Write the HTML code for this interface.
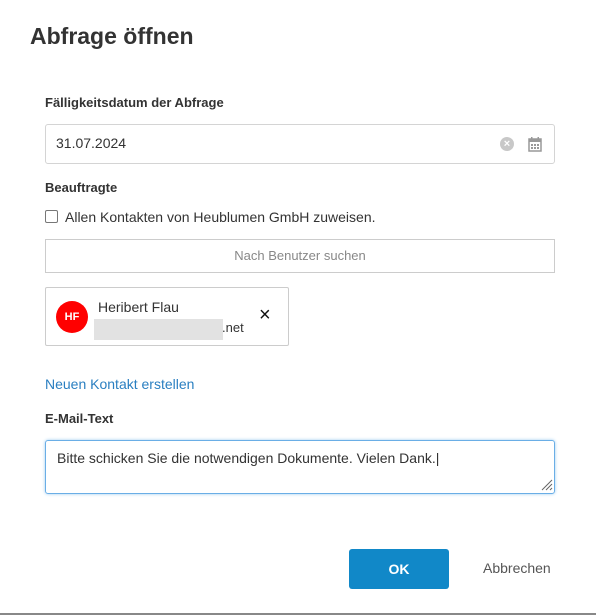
<!DOCTYPE html>
<html><head><meta charset="utf-8"><style>
*{box-sizing:border-box;margin:0;padding:0}
body{width:596px;height:615px;background:#fff;font-family:"Liberation Sans",sans-serif;color:#333;position:relative;overflow:hidden;border-bottom:2px solid #888}
.a{position:absolute}
.lbl{font-size:13px;font-weight:bold;color:#333}
</style></head><body>
<div class="a" style="left:30px;top:23px;font-size:23px;font-weight:bold;color:#333">Abfrage öffnen</div>
<div class="a lbl" style="left:45px;top:95px">Fälligkeitsdatum der Abfrage</div>
<div class="a" style="left:45px;top:124px;width:510px;height:40px;border:1px solid #d4d4d4;border-radius:3px"></div>
<div class="a" style="left:56px;top:135px;font-size:14px;color:#333">31.07.2024</div>
<div class="a" style="left:500px;top:137px;width:14px;height:14px;border-radius:50%;background:#c8c8c8;color:#fff;font-size:11px;line-height:14px;text-align:center;font-weight:bold">×</div>
<svg class="a" style="left:528px;top:136px" width="14" height="16" viewBox="0 0 14 16"><rect x="1" y="3" width="12" height="12" fill="none" stroke="#999" stroke-width="1.5"/><rect x="1" y="3" width="12" height="3" fill="#999"/><rect x="3" y="1" width="1.5" height="3" fill="#999"/><rect x="9.5" y="1" width="1.5" height="3" fill="#999"/><g fill="#999"><rect x="3" y="8" width="2" height="2"/><rect x="6" y="8" width="2" height="2"/><rect x="9" y="8" width="2" height="2"/><rect x="3" y="11" width="2" height="2"/><rect x="6" y="11" width="2" height="2"/><rect x="9" y="11" width="2" height="2"/></g></svg>
<div class="a lbl" style="left:45px;top:180px">Beauftragte</div>
<div class="a" style="left:45px;top:210px;width:13px;height:13px;border:1.5px solid #777;border-radius:2px"></div>
<div class="a" style="left:65px;top:209px;font-size:14px;color:#333">Allen Kontakten von Heublumen GmbH zuweisen.</div>
<div class="a" style="left:45px;top:239px;width:510px;height:34px;border:1px solid #ccc;font-size:13px;color:#888;text-align:center;line-height:32px">Nach Benutzer suchen</div>
<div class="a" style="left:45px;top:287px;width:244px;height:59px;border:1px solid #ccc;border-radius:2px"></div>
<div class="a" style="left:56px;top:301px;width:32px;height:32px;border-radius:50%;background:#f00;color:#fff;font-size:11px;font-weight:bold;text-align:center;line-height:32px">HF</div>
<div class="a" style="left:98px;top:299px;font-size:14px;color:#333">Heribert Flau</div>
<div class="a" style="left:94px;top:319px;width:129px;height:21px;background:#e2e2e2"></div>
<div class="a" style="left:222px;top:320px;font-size:13px;color:#333">.net</div>
<div class="a" style="left:259px;top:305px;font-size:20px;color:#111;line-height:20px">×</div>
<div class="a" style="left:45px;top:376px;font-size:14px;color:#2a7fc1">Neuen Kontakt erstellen</div>
<div class="a lbl" style="left:45px;top:411px">E-Mail-Text</div>
<div class="a" style="left:45px;top:440px;width:510px;height:54px;border:1px solid #6aaee6;border-radius:3px;box-shadow:0 0 3px #9ccbf0"></div>
<div class="a" style="left:57px;top:450px;font-size:14px;color:#333">Bitte schicken Sie die notwendigen Dokumente. Vielen Dank.|</div>
<svg class="a" style="left:540px;top:478px" width="13" height="13"><path d="M12 2L2 12M12 6L6 12M12 10L10 12" stroke="#666" stroke-width="1"/></svg>
<div class="a" style="left:349px;top:549px;width:100px;height:40px;background:#1188c8;border-radius:3px;color:#fff;font-size:14px;font-weight:bold;text-align:center;line-height:40px">OK</div>
<div class="a" style="left:483px;top:560px;font-size:14px;color:#555">Abbrechen</div>
</body></html>
